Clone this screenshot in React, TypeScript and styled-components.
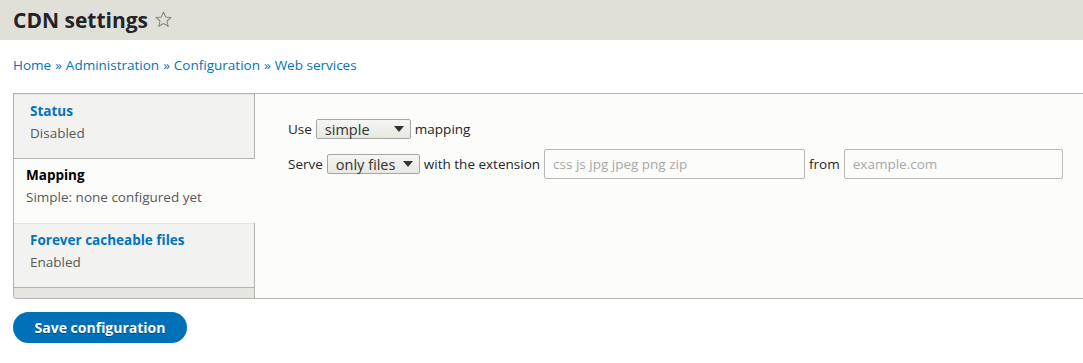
import React from "react";
import styled, { createGlobalStyle } from "styled-components";

const Global = createGlobalStyle`
  html, body { margin: 0; padding: 0; background: #ffffff; }
  body { font-family: "Open Sans", "Liberation Sans", sans-serif; color: #222330; font-size: 13.5px; }
  * { box-sizing: border-box; }
`;

const Header = styled.header`
  height: 40px;
  background: #e0e0d8;
  display: flex;
  align-items: center;
  padding: 0 13px;
  gap: 6px;
`;

const Title = styled.h1`
  margin: 0;
  font-size: 21px;
  font-weight: 700;
  color: #232429;
  line-height: 1;
`;

const Star = styled.svg`
  width: 19px;
  height: 19px;
  margin-top: -1px;
`;

const Breadcrumb = styled.nav`
  padding: 16px 13px 0;
  height: 53px;
  font-size: 13.5px;
  color: #0074bd;
  display: flex;
  gap: 4px;
`;

const Crumb = styled.a`
  color: #0074bd;
  text-decoration: none;
`;

const Sep = styled.span`
  color: #0074bd;
`;

const Tabs = styled.div`
  margin-left: 13px;
  display: flex;
  border: 1px solid #b3b3ae;
  border-right: none;
  border-bottom-left-radius: 4px;
  background: #fcfcfa;
  height: 206px;
  overflow: hidden;
`;

const Menu = styled.ul`
  list-style: none;
  margin: 0;
  padding: 0;
  width: 241px;
  flex: none;
  display: flex;
  flex-direction: column;
  background: #e6e5e1;
  border-right: 1px solid #b3b3ae;
`;

const Item = styled.li<{ $selected?: boolean }>`
  height: ${(p) => (p.$selected ? "64px" : "65px")};
  padding: ${(p) => (p.$selected ? "7px 12px" : "8px 16px")};
  background: ${(p) => (p.$selected ? "#fcfcfa" : "#f2f2f0")};
  border-bottom: ${(p) => (p.$selected ? "none" : "1px solid #b3b3ae")};
  margin-right: ${(p) => (p.$selected ? "-1px" : "0")};
  box-shadow: ${(p) => (p.$selected ? "none" : "inset 0 1px 1px rgba(0,0,0,0.06)")};
  display: flex;
  flex-direction: column;
  gap: 4px;
`;

const ItemTitle = styled.strong<{ $selected?: boolean }>`
  font-size: 13.5px;
  font-weight: 700;
  color: ${(p) => (p.$selected ? "#000000" : "#0074bd")};
`;

const Summary = styled.span`
  font-size: 13.5px;
  color: #595959;
`;

const Panel = styled.div`
  flex: 1;
  min-width: 0;
  padding: 25px 0 0 33px;
  display: flex;
  flex-direction: column;
  gap: 10px;
`;

const Row = styled.div`
  display: flex;
  align-items: center;
  gap: 4px;
  font-size: 13.5px;
  color: #232429;
  white-space: nowrap;
`;

const Label = styled.span`
  flex: none;
`;

const Select = styled.div<{ $w: number }>`
  flex: none;
  width: ${(p) => p.$w}px;
  height: 20px;
  border: 1px solid #a6a6a6;
  border-radius: 2px;
  background: linear-gradient(#f6f6f3, #e8e7e0);
  display: flex;
  align-items: center;
  justify-content: space-between;
  padding: 0 6px 0 8px;
  font-size: 14.5px;
  color: #333;
`;

const Arrow = styled.span`
  width: 0;
  height: 0;
  border-left: 5px solid transparent;
  border-right: 5px solid transparent;
  border-top: 6px solid #333;
`;

const Input = styled.div<{ $w: number }>`
  flex: none;
  width: ${(p) => p.$w}px;
  height: 30px;
  border: 1px solid #b8b8b8;
  border-radius: 2px;
  background: #fcfcfa;
  display: flex;
  align-items: center;
  padding: 0 8px;
  font-size: 13.5px;
  color: #a8a8a8;
`;

const Button = styled.button`
  margin: 13px 0 0 13px;
  height: 31px;
  width: 174px;
  border: none;
  border-radius: 16px;
  background: #0071b8;
  color: #fff;
  font-family: "Open Sans", "Liberation Sans", sans-serif;
  font-weight: 700;
  font-size: 14px;
  text-shadow: 0 1px 0 rgba(0,0,0,0.4);
`;

export default function App() {
  return (
    <>
      <Global />
      <Header>
        <Title>CDN settings</Title>
        <Star viewBox="0 0 24 24">
          <path
            d="M12 2.5l2.8 6.3 6.8.6-5.2 4.5 1.6 6.7L12 17.1l-6 3.5 1.6-6.7-5.2-4.5 6.8-.6z"
            fill="none"
            stroke="#868680"
            strokeWidth="1.3"
            strokeLinejoin="round"
          />
        </Star>
      </Header>
      <Breadcrumb>
        <Crumb>Home</Crumb>
        <Sep>»</Sep>
        <Crumb>Administration</Crumb>
        <Sep>»</Sep>
        <Crumb>Configuration</Crumb>
        <Sep>»</Sep>
        <Crumb>Web services</Crumb>
      </Breadcrumb>
      <Tabs>
        <Menu>
          <Item>
            <ItemTitle>Status</ItemTitle>
            <Summary>Disabled</Summary>
          </Item>
          <Item $selected>
            <ItemTitle $selected>Mapping</ItemTitle>
            <Summary>Simple: none configured yet</Summary>
          </Item>
          <Item>
            <ItemTitle>Forever cacheable files</ItemTitle>
            <Summary>Enabled</Summary>
          </Item>
        </Menu>
        <Panel>
          <Row>
            <Label>Use</Label>
            <Select $w={95}>
              simple <Arrow />
            </Select>
            <Label>mapping</Label>
          </Row>
          <Row>
            <Label>Serve</Label>
            <Select $w={93}>
              only files <Arrow />
            </Select>
            <Label>with the extension</Label>
            <Input $w={261}>css js jpg jpeg png zip</Input>
            <Label>from</Label>
            <Input $w={219}>example.com</Input>
          </Row>
        </Panel>
      </Tabs>
      <Button>Save configuration</Button>
    </>
  );
}
